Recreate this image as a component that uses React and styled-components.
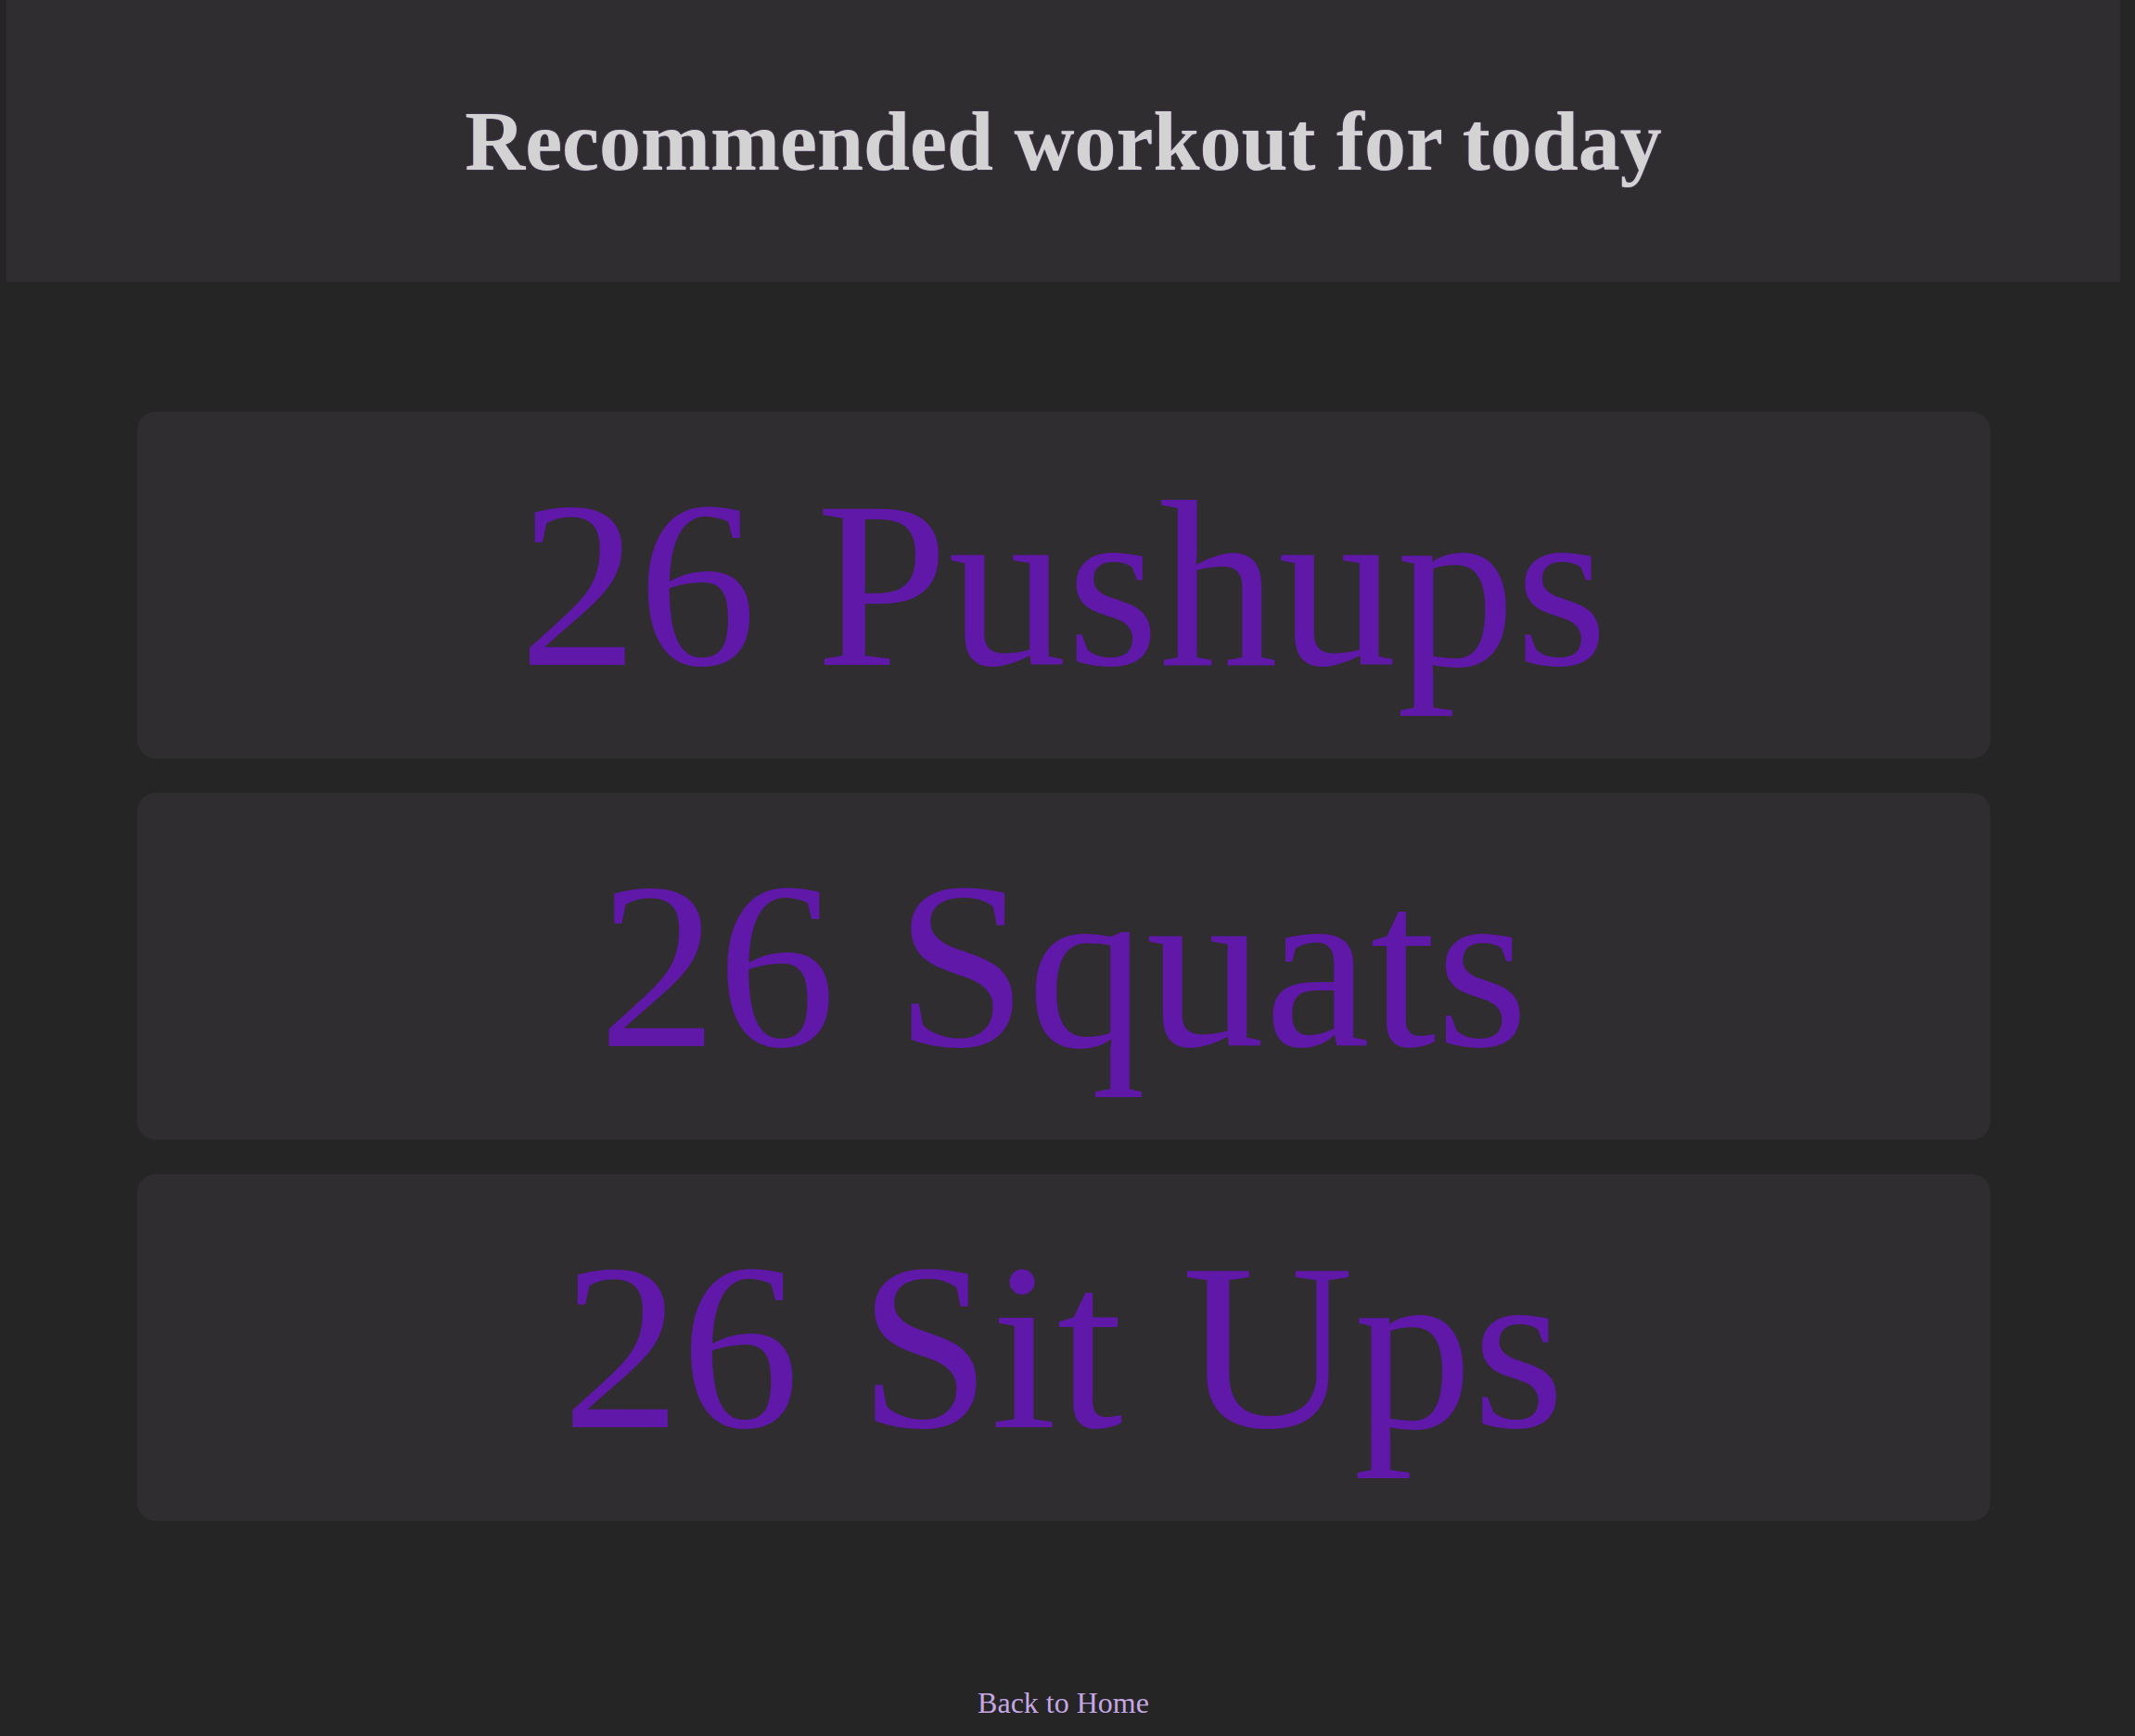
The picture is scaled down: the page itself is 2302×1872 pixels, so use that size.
import React from "react";
import styled, { createGlobalStyle } from "styled-components";

const GlobalStyle = createGlobalStyle`
  html, body {
    margin: 0;
    padding: 0;
    background: #262526;
  }
  body {
    font-family: "Liberation Serif", "Times New Roman", serif;
  }
`;

const Page = styled.div`
  min-height: 1872px;
  padding: 0 16px 0 7px;
  box-sizing: border-box;
  display: flex;
  flex-direction: column;
  align-items: center;
`;

const Header = styled.header`
  align-self: stretch;
  height: 304px;
  background: #2f2d2f;
  display: flex;
  align-items: center;
  justify-content: center;
`;

const Title = styled.h1`
  margin: 0;
  font-size: 90px;
  font-weight: 700;
  color: #d4d3d4;
  text-shadow: 0 0 1.5px #8a5cb8;
  line-height: normal;
`;

const List = styled.main`
  width: 1998px;
  margin-top: 140px;
  display: flex;
  flex-direction: column;
  gap: 37px;
`;

const Card = styled.div`
  height: 374px;
  background: #2f2d2f;
  border-radius: 20px;
  display: flex;
  align-items: center;
  justify-content: center;
`;

const Exercise = styled.p`
  margin: 0;
  font-size: 256px;
  line-height: normal;
  color: #5f18a8;
`;

const BackLink = styled.a`
  margin-top: 178px;
  font-size: 32px;
  line-height: normal;
  color: #c4a7e3;
  text-decoration: none;
`;

const exercises = ["26 Pushups", "26 Squats", "26 Sit Ups"];

export default function App() {
  return (
    <>
      <GlobalStyle />
      <Page>
        <Header>
          <Title>Recommended workout for today</Title>
        </Header>
        <List>
          {exercises.map((e) => (
            <Card key={e}>
              <Exercise>{e}</Exercise>
            </Card>
          ))}
        </List>
        <BackLink href="#">Back to Home</BackLink>
      </Page>
    </>
  );
}
